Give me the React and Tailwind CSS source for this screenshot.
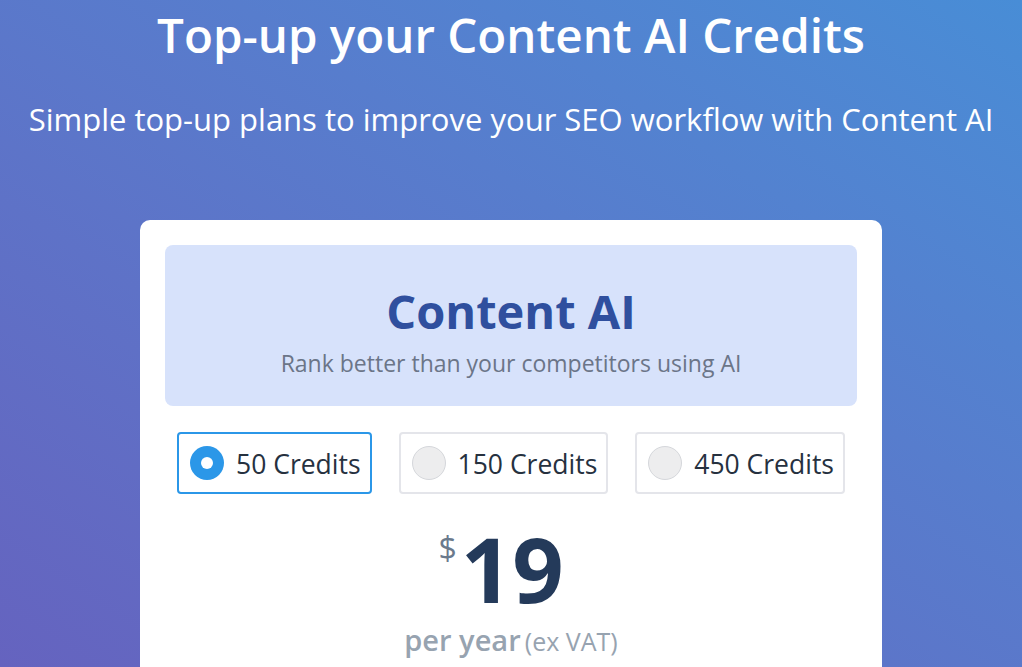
import { useState } from "react";

const plans = [
  { id: 50, label: "50 Credits", price: 19 },
  { id: 150, label: "150 Credits", price: 49 },
  { id: 450, label: "450 Credits", price: 129 },
];

function App() {
  const [selected, setSelected] = useState(50);
  const plan = plans.find((p) => p.id === selected);

  return (
    <div
      className="h-[667px] w-full overflow-hidden bg-gradient-to-tr from-[#6563bf] to-[#488dd6]"
      style={{ fontFamily: '"Open Sans", "Noto Sans", sans-serif' }}
    >
      {/* HEADER */}
      <div className="pt-[3px] text-center text-white">
        <h1 className="text-[47.5px] font-semibold leading-[64px]">
          Top-up your Content AI Credits
        </h1>
        <p className="mt-[31px] text-[31px] leading-[42px]">
          Simple top-up plans to improve your SEO workflow with Content AI
        </p>
      </div>

      {/* CARD */}
      <div className="mx-auto mt-[80px] w-[742px] rounded-[10px] bg-white px-[25px] pt-[25px] pb-10">
        <div className="flex h-[161px] flex-col items-center justify-center rounded-[8px] bg-[#d7e2fb]">
          <h2 className="mt-[10px] text-[47px] font-bold leading-[56px] text-[#2f4f9e]">
            Content AI
          </h2>
          <p className="mt-[8px] text-[23px] leading-[32px] text-[#6b7588]">
            Rank better than your competitors using AI
          </p>
        </div>

        {/* OPTIONS */}
        <div className="mt-[26px] flex justify-between px-[12px]">
          {plans.map((p) => {
            const active = p.id === selected;
            return (
              <button
                key={p.id}
                onClick={() => setSelected(p.id)}
                className={`flex h-[62px] items-center gap-[12px] rounded-[4px] border-2 pl-[11px] pr-[9px] ${
                  active ? "border-[#2b97e8]" : "border-[#e4e5ea]"
                }`}
              >
                {active ? (
                  <span className="flex h-[34px] w-[34px] items-center justify-center rounded-full bg-[#2b97e8]">
                    <span className="h-[12px] w-[12px] rounded-full bg-white" />
                  </span>
                ) : (
                  <span className="h-[34px] w-[34px] rounded-full border border-[#d5d7db] bg-[#ededee]" />
                )}
                <span className="mt-[4px] text-[26.5px] text-[#26313f]">{p.label}</span>
              </button>
            );
          })}
        </div>

        {/* PRICE */}
        <div className="mt-[29px] flex justify-center pr-[20px]">
          <span className="mt-[9px] text-[32px] leading-none text-[#6b7a8c]">$</span>
          <span className="ml-[4px] text-[90px] font-bold leading-[90px] text-[#243a5a]">
            {plan.price}
          </span>
        </div>
        <p className="mt-[7px] text-center leading-[40px] text-[#97a3b0]">
          <span className="text-[29px] font-semibold">per year</span>{" "}
          <span className="text-[25px]">(ex VAT)</span>
        </p>
      </div>
    </div>
  );
}

export default App;
